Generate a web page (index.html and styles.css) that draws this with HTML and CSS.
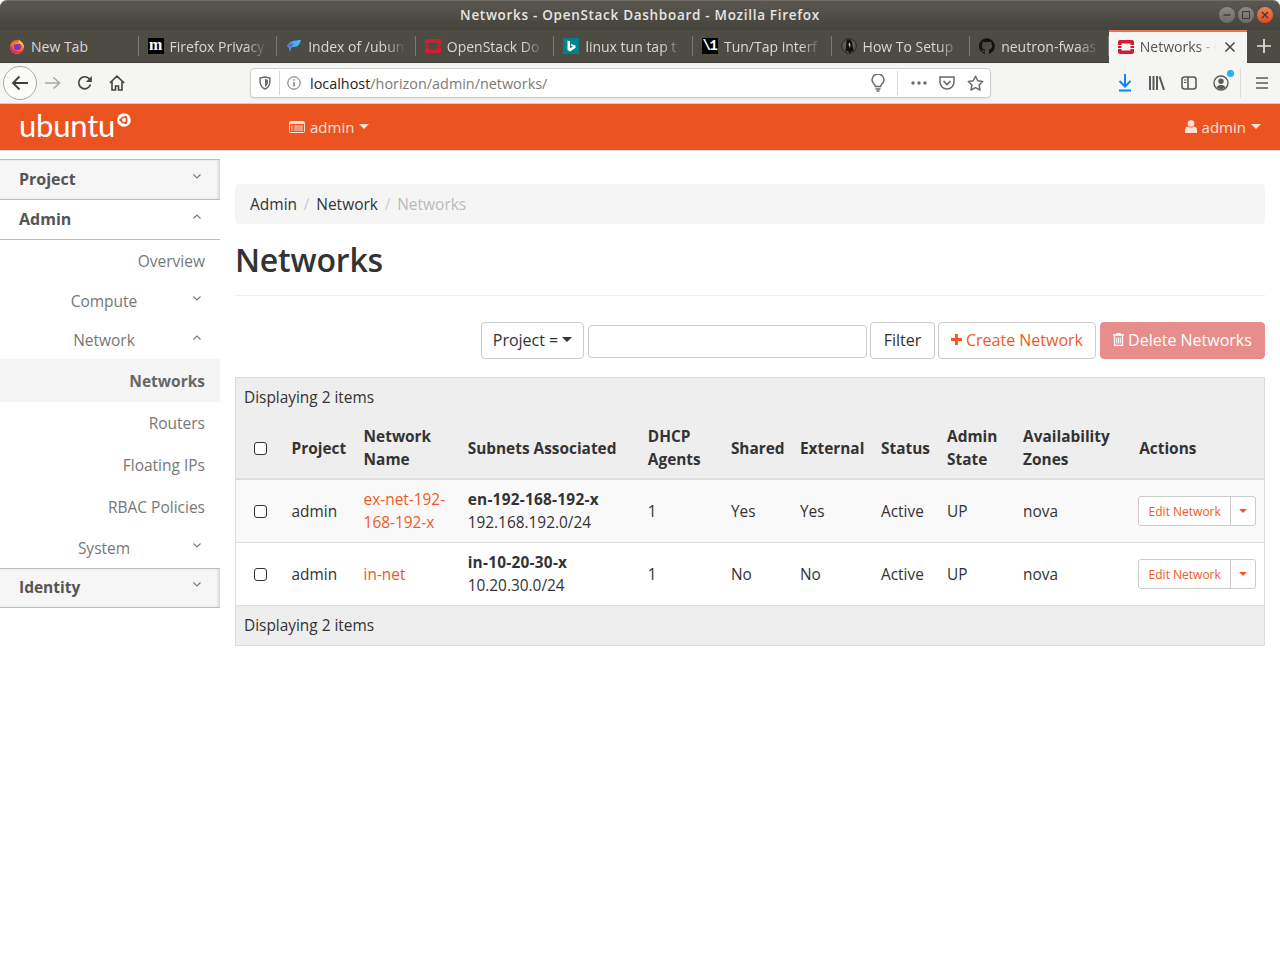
FILE: index.html
```html
<!DOCTYPE html>
<html lang="en">
<head>
  <meta charset="UTF-8">
  <title>Networks - OpenStack Dashboard - Mozilla Firefox</title>
  <link rel="stylesheet" href="styles.css">
</head>
<body>
  <!-- browser window chrome -->
  <div class="titlebar">
    <span class="title-text">Networks - OpenStack Dashboard - Mozilla Firefox</span>
    <div class="win-btns">
      <span class="win-btn"><svg width="16" height="16" viewBox="0 0 16 16"><path d="M4.500 8h7" stroke="#3c3b37" stroke-width="1.500"/></svg></span>
      <span class="win-btn"><svg width="16" height="16" viewBox="0 0 16 16"><rect x="4.500" y="4.500" width="7" height="7" fill="none" stroke="#3c3b37"/></svg></span>
      <span class="win-btn win-close"><svg width="16" height="16" viewBox="0 0 16 16"><path d="M5 5l6 6M11 5l-6 6" stroke="#3c3b37" stroke-width="1.400"/></svg></span>
    </div>
  </div>

  <div class="tabstrip">
    <div class="tab">
      <svg class="favicon" viewBox="0 0 16 16"><circle cx="8" cy="9" r="7" fill="#f5702b"/><path d="M9.500 .5c.5 2 2 2.500 3.500 4 1.500 1.500 2.300 3.500 2 6-1-3-3-5-6-5.500 1-1.500 1-3 .5-4.500z" fill="#fdc52e"/><path d="M1 9c.2 3.500 3 6.500 7 6.500 3 0 5.500-1.500 6.500-4-2 2-5 2.500-7.500 1.500C4.500 12 3 10.500 3 8z" fill="#e8285a"/><circle cx="8.300" cy="8.800" r="3.500" fill="#7b36c8"/><path d="M5 6.500c1-1.500 4-2 6-.5-2 0-4 0-6 .5z" fill="#f9a03a"/></svg>
      <span class="tab-label tab-label-full">New Tab</span>
    </div>
    <div class="tab">
      <span class="favicon fav-text fav-m">m</span>
      <span class="tab-label">Firefox Privacy</span>
    </div>
    <div class="tab">
      <svg class="favicon" viewBox="0 0 16 16"><path d="M1 8c2-4 7-6 14-6-1 4-3 7-7 7-1 0-2 0-3 1l-1 4-1-4c-1-1-1-2-2-2z" fill="#3fb6ec"/><path d="M1 8c2-2 4-3 7-3l-3 5c-1-1-3-1-4-2z" fill="#7a5fd0"/></svg>
      <span class="tab-label">Index of /ubun</span>
    </div>
    <div class="tab">
      <svg class="favicon" viewBox="0 0 16 16"><use href="#os-logo"/></svg>
      <span class="tab-label">OpenStack Do</span>
    </div>
    <div class="tab">
      <svg class="favicon" viewBox="0 0 16 16"><rect width="16" height="16" fill="#00808a"/><path d="M4.500 2.500l2.500.8v7l3-1.700-1.500-.7-.9-2.200 4.900 1.700v2.600L7 13.500l-2.500-1.400z" fill="#fff"/></svg>
      <span class="tab-label">linux tun tap t</span>
    </div>
    <div class="tab">
      <span class="favicon fav-text fav-v">\1</span>
      <span class="tab-label">Tun/Tap interf</span>
    </div>
    <div class="tab">
      <svg class="favicon" viewBox="0 0 16 16"><circle cx="8" cy="8" r="7.300" fill="#5d5a52" stroke="#26251f"/><path d="M7.500 1.500c2.500 0 3.500 2 3.500 4 0 3 2 5 1.500 8.500l-2-1L9 15.500 7 13l-2.500.5c0-3 1-5 .8-7.500C5 3.500 5.500 1.500 7.500 1.500z" fill="#0f0e0b"/><path d="M8.500 4.500c1 .5 1 3 .5 5.500l-1.500-3.500z" fill="#c9c8c2"/></svg>
      <span class="tab-label">How To Setup</span>
    </div>
    <div class="tab">
      <svg class="favicon" viewBox="0 0 16 16"><path fill="#111" d="M8 .2a8 8 0 0 0-2.500 15.600c.4.100.5-.2.500-.4v-1.400c-2.200.5-2.700-1-2.700-1-.4-.9-.9-1.200-.9-1.200-.7-.5.100-.5.100-.5.800.100 1.200.8 1.200.8.700 1.200 1.900.9 2.300.7.100-.5.300-.9.500-1.100-1.800-.2-3.600-.9-3.600-4 0-.9.300-1.600.8-2.100-.1-.2-.4-1 .1-2.100 0 0 .7-.2 2.200.8a7.500 7.500 0 0 1 4 0c1.500-1 2.200-.8 2.200-.8.400 1.100.2 1.900.1 2.100.5.600.8 1.300.8 2.100 0 3.100-1.900 3.700-3.700 3.900.3.300.6.800.6 1.500v2.200c0 .2.100.5.600.4A8 8 0 0 0 8 .2z"/></svg>
      <span class="tab-label">neutron-fwaas</span>
    </div>
    <div class="tab tab-active">
      <svg class="favicon" viewBox="0 0 16 16"><use href="#os-logo"/></svg>
      <span class="tab-label">Networks - O</span>
      <svg class="tab-close" width="12" height="12" viewBox="0 0 12 12"><path d="M1.500 1.500l9 9M10.500 1.500l-9 9" stroke="#45443f" stroke-width="1.500"/></svg>
    </div>
    <svg class="tab-new" width="14" height="14" viewBox="0 0 14 14"><path d="M7 0v14M0 7h14" stroke="#e4e3df" stroke-width="1.700"/></svg>
  </div>

  <svg class="defs-only" width="0" height="0">
    <defs>
      <g id="os-logo"><path fill="#da1a32" d="M2 1h12a2 2 0 0 1 2 2v3h-3.500V4.500h-9V6H0V3a2 2 0 0 1 2-2zM0 10h3.500v1.500h9V10H16v3a2 2 0 0 1-2 2H2a2 2 0 0 1-2-2z"/><rect y="7" width="3.500" height="2" fill="#da1a32"/><rect x="12.500" y="7" width="3.500" height="2" fill="#da1a32"/></g>
    </defs>
  </svg>

  <div class="toolbar">
    <span class="back-btn"><svg width="18" height="16" viewBox="0 0 18 16"><path d="M17 8H2M8.500 1.500L2 8l6.500 6.500" fill="none" stroke="#3f3e3a" stroke-width="1.800"/></svg></span>
    <svg class="tool-fwd" width="16" height="14" viewBox="0 0 16 14"><path d="M0 7h14M8.500 1.500L14.500 7l-6 5.500" fill="none" stroke="#a8a8a6" stroke-width="1.600"/></svg>
    <svg class="tool-reload" width="16" height="16" viewBox="0 0 16 16"><path d="M13.500 9.500A6 6 0 1 1 12 3.500L14 5.500" fill="none" stroke="#45443f" stroke-width="1.700"/><path d="M14.800 1v6h-6z" fill="#45443f"/></svg>
    <svg class="tool-home" width="16" height="16" viewBox="0 0 16 16"><path d="M.8 8L8 1.200 15.200 8M3 6.500V15h3.500v-4h3v4H13V6.500" fill="none" stroke="#45443f" stroke-width="1.600"/></svg>

    <div class="urlbar">
      <svg class="url-shield" width="12" height="14" viewBox="0 0 12 14"><path d="M1 2l5-1 5 1c0 5 0 9-5 11C1 11 1 7 1 2z" fill="none" stroke="#6b6a66" stroke-width="1.500"/><path d="M6 3l3 .7C9 7 9 9 6 10.800z" fill="#6b6a66"/></svg>
      <span class="url-sep"></span>
      <svg class="url-info" width="14" height="14" viewBox="0 0 14 14"><circle cx="7" cy="7" r="6.200" fill="none" stroke="#6b6a66"/><path d="M7 6v4.500M7 3.200v1.500" stroke="#6b6a66" stroke-width="1.300"/></svg>
      <span class="url-text"><span class="url-host">localhost</span>/horizon/admin/networks/</span>
      <svg class="url-bulb" width="14" height="18" viewBox="0 0 14 18"><path d="M4.500 12.500C4 10 1 9 1 6a6 6 0 0 1 12 0c0 3-3 4-3.500 6.500z" fill="none" stroke="#6b6a66" stroke-width="1.500"/><path d="M4.500 15h5M5.500 17h3" stroke="#6b6a66" stroke-width="1.300"/></svg>
      <span class="url-sep url-sep-right"></span>
      <svg class="url-dots" width="16" height="4" viewBox="0 0 16 4"><circle cx="2" cy="2" r="1.700" fill="#6b6a66"/><circle cx="8" cy="2" r="1.700" fill="#6b6a66"/><circle cx="14" cy="2" r="1.700" fill="#6b6a66"/></svg>
      <svg class="url-pocket" width="16" height="14" viewBox="0 0 16 14"><path d="M1 1h14v5a7 7 0 0 1-14 0z" fill="none" stroke="#6b6a66" stroke-width="1.500"/><path d="M4.500 5L8 8.500 11.500 5" fill="none" stroke="#6b6a66" stroke-width="1.700"/></svg>
      <svg class="url-star" width="17" height="16" viewBox="0 0 17 16"><path d="M8.500 1.200l2.200 4.600 5 .7-3.600 3.500.9 5-4.500-2.400L4 15l.9-5L1.300 6.500l5-.7z" fill="none" stroke="#6b6a66" stroke-width="1.500" stroke-linejoin="round"/></svg>
    </div>

    <div class="tool-right">
      <svg class="tool-download" width="14" height="18" viewBox="0 0 14 18"><path d="M7 0v12.500M1.500 7L7 12.500 12.500 7M1 16.500h12" fill="none" stroke="#0a84ff" stroke-width="2"/></svg>
      <svg width="16" height="14" viewBox="0 0 16 14"><path d="M1 0v14M4.500 0v14M8 0v14M10.500 .5l4.500 13.500" fill="none" stroke="#5b5a55" stroke-width="2"/></svg>
      <svg width="16" height="14" viewBox="0 0 16 14"><rect x="1" y="1" width="14" height="12" rx="2.500" fill="none" stroke="#5b5a55" stroke-width="1.600"/><path d="M7 1v12" stroke="#5b5a55" stroke-width="1.600"/><path d="M3 4h2.500M3 6.500h2.500" stroke="#5b5a55"/></svg>
      <span class="tool-account"><svg width="16" height="16" viewBox="0 0 16 16"><circle cx="8" cy="8" r="7" fill="none" stroke="#5b5a55" stroke-width="1.400"/><circle cx="8" cy="6.300" r="2.700" fill="#5b5a55"/><path d="M3.500 12.500c1-2 2.500-2.500 4.500-2.500s3.500.5 4.500 2.500a7 7 0 0 1-9 0z" fill="#5b5a55"/></svg><span class="tool-dot"></span></span>
      <span class="tool-sep"></span>
      <svg width="12" height="12" viewBox="0 0 12 12"><path d="M0 1h12M0 6h12M0 11h12" stroke="#5b5a55" stroke-width="1.700"/></svg>
    </div>
  </div>

  <!-- horizon page -->
  <nav class="topnav">
    <span class="brand">ubuntu<svg class="brand-mark" width="14" height="14" viewBox="0 0 14 14"><circle cx="7" cy="7" r="6.800" fill="#fff"/><circle cx="7" cy="7" r="2.800" fill="none" stroke="#eb5421" stroke-width="1.600"/><circle cx="3.400" cy="7" r="1.200" fill="#eb5421"/><circle cx="8.800" cy="3.900" r="1.200" fill="#eb5421"/><circle cx="8.800" cy="10.100" r="1.200" fill="#eb5421"/></svg></span>
    <span class="nav-project">
      <svg width="16" height="12" viewBox="0 0 16 12"><rect x=".5" y=".5" width="15" height="11" rx="1" fill="none" stroke="#fbe0d5"/><path d="M1 1h14v2H1z" fill="#fbe0d5"/><path d="M2 5h2M5 5h9M2 7h2M5 7h9M2 9h2M5 9h9" stroke="#fbe0d5"/></svg>
      admin <i class="caret"></i>
    </span>
    <span class="nav-user">
      <svg width="12" height="13" viewBox="0 0 12 13"><circle cx="6" cy="3.500" r="3.300" fill="#fbe0d5"/><path d="M0 13V10c0-2.500 1.500-3.500 3-3.500 1 .8 2 1 3 1s2-.2 3-1c1.500 0 3 1 3 3.500v3z" fill="#fbe0d5"/></svg>
      admin <i class="caret"></i>
    </span>
  </nav>

  <div class="page">
    <aside class="sidebar">
      <div class="side-head side-closed"><span>Project</span><svg class="chev" width="8" height="5" viewBox="0 0 8 5"><path d="M.5.500L4 4 7.500.500" fill="none" stroke="#777" stroke-width="1.100"/></svg></div>
      <div class="side-head side-open"><span>Admin</span><svg class="chev" width="8" height="5" viewBox="0 0 8 5"><path d="M.5 4.500L4 1l3.500 3.500" fill="none" stroke="#777" stroke-width="1.100"/></svg></div>
      <div class="side-item side-overview">Overview</div>
      <div class="side-group"><span>Compute</span><svg class="chev" width="8" height="5" viewBox="0 0 8 5"><path d="M.5.500L4 4 7.500.500" fill="none" stroke="#777" stroke-width="1.100"/></svg></div>
      <div class="side-group"><span>Network</span><svg class="chev" width="8" height="5" viewBox="0 0 8 5"><path d="M.5 4.500L4 1l3.500 3.500" fill="none" stroke="#777" stroke-width="1.100"/></svg></div>
      <div class="side-item side-current">Networks</div>
      <div class="side-item">Routers</div>
      <div class="side-item">Floating IPs</div>
      <div class="side-item">RBAC Policies</div>
      <div class="side-group side-system"><span>System</span><svg class="chev" width="8" height="5" viewBox="0 0 8 5"><path d="M.5.500L4 4 7.500.500" fill="none" stroke="#777" stroke-width="1.100"/></svg></div>
      <div class="side-head side-closed side-identity"><span>Identity</span><svg class="chev" width="8" height="5" viewBox="0 0 8 5"><path d="M.5.500L4 4 7.500.500" fill="none" stroke="#777" stroke-width="1.100"/></svg></div>
    </aside>

    <main class="content">
      <ol class="breadcrumb">
        <li>Admin</li>
        <li class="crumb-sep">/</li>
        <li>Network</li>
        <li class="crumb-sep">/</li>
        <li class="crumb-active">Networks</li>
      </ol>
      <h1 class="page-title">Networks</h1>

      <div class="actions">
        <button class="btn btn-select">Project = <i class="caret caret-dark"></i></button>
        <input class="filter-input" type="text">
        <button class="btn btn-filter">Filter</button>
        <button class="btn btn-create"><svg width="13" height="13" viewBox="0 0 13 13"><path d="M6.500 0v13M0 6.500h13" stroke="#f05a22" stroke-width="3.400"/></svg>Create Network</button>
        <button class="btn btn-delete"><svg width="11" height="13" viewBox="0 0 11 13"><path d="M0 2h11M4 2V.700h3V2M1.500 3v9.300h8V3" fill="none" stroke="#fff" stroke-width="1.300"/><path d="M3.700 4.500v6M5.500 4.500v6M7.300 4.500v6" stroke="#fff"/></svg>Delete Networks</button>
      </div>

      <table class="net-table">
        <colgroup>
          <col class="col-check">
          <col class="col-project">
          <col class="col-name">
          <col class="col-subnets">
          <col class="col-dhcp">
          <col class="col-shared">
          <col class="col-external">
          <col class="col-status">
          <col class="col-admin">
          <col class="col-zones">
          <col class="col-actions">
        </colgroup>
        <thead>
          <tr class="row-caption"><td colspan="11">Displaying 2 items</td></tr>
          <tr class="row-head">
            <th><input class="check" type="checkbox"></th>
            <th>Project</th>
            <th>Network Name</th>
            <th>Subnets Associated</th>
            <th>DHCP Agents</th>
            <th>Shared</th>
            <th>External</th>
            <th>Status</th>
            <th>Admin State</th>
            <th>Availability Zones</th>
            <th>Actions</th>
          </tr>
        </thead>
        <tbody>
          <tr class="row-odd">
            <td><input class="check" type="checkbox"></td>
            <td>admin</td>
            <td><a class="net-link">ex-net-192-168-192-x</a></td>
            <td><b>en-192-168-192-x</b><br>192.168.192.0/24</td>
            <td>1</td>
            <td>Yes</td>
            <td>Yes</td>
            <td>Active</td>
            <td>UP</td>
            <td>nova</td>
            <td><span class="btn-split"><span class="split-main">Edit Network</span><span class="split-caret"><i class="caret caret-orange"></i></span></span></td>
          </tr>
          <tr>
            <td><input class="check" type="checkbox"></td>
            <td>admin</td>
            <td><a class="net-link">in-net</a></td>
            <td><b>in-10-20-30-x</b><br>10.20.30.0/24</td>
            <td>1</td>
            <td>No</td>
            <td>No</td>
            <td>Active</td>
            <td>UP</td>
            <td>nova</td>
            <td><span class="btn-split"><span class="split-main">Edit Network</span><span class="split-caret"><i class="caret caret-orange"></i></span></span></td>
          </tr>
        </tbody>
        <tfoot>
          <tr class="row-caption row-foot"><td colspan="11">Displaying 2 items</td></tr>
        </tfoot>
      </table>
    </main>
  </div>
</body>
</html>
```

FILE: styles.css
```css
html, body {
  height: 100%;
  margin: 0;
  padding: 0;
  background-color: #fff;
  font-family: "Open Sans", "Noto Sans", sans-serif;
  font-size: 15px;
  color: #333;
  overflow: hidden;
}

/* window title bar */
.titlebar {
  height: 30px;
  display: flex;
  align-items: center;
  justify-content: center;
  position: relative;
  box-sizing: border-box;
  padding-bottom: 2px;
  background: linear-gradient(#5a5850, #44423c);
  border-radius: 7px 7px 0 0;
  border-top: 1px solid #6e6c64;
}
.title-text {
  color: #e6e5e1;
  font-weight: 600;
  font-size: 13.5px;
  letter-spacing: 0.7px;
}
.win-btns {
  position: absolute;
  right: 7px;
  top: 6px;
  display: flex;
  gap: 3px;
}
.win-btn {
  width: 16px;
  height: 16px;
  border-radius: 50%;
  background: linear-gradient(#8b8981, #6d6b64);
}
.win-close {
  background: linear-gradient(#f0815a, #dc4d20);
}
.win-btn svg {
  display: block;
}

/* tabs */
.tabstrip {
  height: 33px;
  display: flex;
  background-color: #4e4b43;
  position: relative;
  box-sizing: border-box;
  border-bottom: 1px solid #3c3a34;
}
.tab {
  width: 138.6px;
  flex: none;
  box-sizing: border-box;
  display: flex;
  align-items: center;
  padding-left: 9px;
  padding-right: 10px;
  gap: 6px;
  color: #d9d8d3;
  font-size: 14px;
  position: relative;
  white-space: nowrap;
}
.tab::after {
  content: "";
  position: absolute;
  right: 0;
  top: 6px;
  bottom: 6px;
  width: 1px;
  background-color: #7a7870;
}
.tab-label {
  flex: 1;
  min-width: 0;
  -webkit-mask-image: linear-gradient(to right, #000 78%, transparent);
  mask-image: linear-gradient(to right, #000 78%, transparent);
}
.tab-label-full {
  -webkit-mask-image: none;
  mask-image: none;
}
.tab-active {
  background-color: #f5f5f3;
  color: #55544f;
  border-top: 2px solid #e9754a;
  height: 33px;
  padding-right: 11px;
  padding-bottom: 2px;
}
.tab-active::after {
  display: none;
}
.tab-active .tab-label {
  -webkit-mask-image: linear-gradient(to right, #000 74%, transparent 98%);
  mask-image: linear-gradient(to right, #000 74%, transparent 98%);
}
.tab-close {
  flex: none;
  margin-top: 1px;
}
.tab-new {
  margin-left: 10px;
  align-self: center;
}
.favicon {
  width: 16px;
  height: 16px;
  flex: none;
}
.fav-text {
  display: block;
  font-weight: 700;
  text-align: center;
  line-height: 16px;
  color: #fff;
  background-color: #000;
  font-size: 13px;
}
.fav-m {
  font-family: "Liberation Serif", serif;
  font-size: 16px;
  line-height: 13px;
}
.fav-v {
  font-family: "Liberation Mono", monospace;
  font-size: 14px;
  letter-spacing: -1.5px;
  text-indent: -1px;
}
.defs-only {
  position: absolute;
}

/* url toolbar */
.toolbar {
  height: 41px;
  display: flex;
  align-items: center;
  box-sizing: border-box;
  background-color: #f5f5f3;
  border-bottom: 1px solid #cfcfcc;
  padding-left: 3px;
}
.back-btn {
  width: 34px;
  height: 34px;
  flex: none;
  box-sizing: border-box;
  border: 1px solid #a9a9a6;
  border-radius: 50%;
  background-color: #fbfbfa;
  display: flex;
  align-items: center;
  justify-content: center;
}
.tool-fwd {
  margin-left: 8px;
}
.tool-reload {
  margin-left: 16px;
}
.tool-home {
  margin-left: 16px;
}
.urlbar {
  margin-left: 125px;
  width: 741px;
  height: 30px;
  box-sizing: border-box;
  border: 1px solid #cfcfcc;
  border-radius: 4px;
  background-color: #fff;
  display: flex;
  align-items: center;
  padding-left: 8px;
  box-shadow: 0 1px 2px rgba(0,0,0,0.08);
}
.url-sep {
  width: 1px;
  height: 24px;
  background-color: #d7d7d4;
  margin-left: 8px;
}
.url-info {
  margin-left: 7px;
}
.url-text {
  margin-left: 9px;
  width: 561px;
  flex: none;
  font-size: 14.4px;
  color: #7a7a78;
}
.url-host {
  color: #222;
}
.url-sep-right {
  margin-left: 12px;
}
.url-dots {
  margin-left: 13px;
}
.url-pocket {
  margin-left: 12px;
}
.url-star {
  margin-left: 12px;
}
.tool-right {
  display: flex;
  align-items: center;
  margin-left: 127px;
  gap: 16px;
}
.tool-download {
  margin-right: 1px;
}
.tool-account {
  display: block;
  position: relative;
  height: 16px;
}
.tool-dot {
  position: absolute;
  right: -5px;
  top: -5px;
  width: 7px;
  height: 7px;
  border-radius: 50%;
  background-color: #1fb2f5;
}
.tool-sep {
  width: 1px;
  height: 30px;
  background-color: #dcdcd9;
  margin-left: -5px;
  margin-right: -1px;
}

/* orange top nav */
.topnav {
  height: 47px;
  box-sizing: border-box;
  background-color: #eb5421;
  border-bottom: 1px solid #d9d9d9;
  display: flex;
  align-items: center;
  color: #fbe0d5;
  font-size: 15px;
  padding-left: 19px;
  padding-right: 19px;
}
.brand {
  color: #fff;
  font-family: "Lato", sans-serif;
  font-size: 31px;
  font-weight: 400;
  line-height: 42px;
  width: 270px;
  flex: none;
  display: flex;
  align-self: flex-start;
  letter-spacing: -0.2px;
}
.brand-mark {
  margin-top: 9px;
  margin-left: 2px;
}
.nav-project, .nav-user {
  display: flex;
  align-items: center;
  gap: 5px;
  padding-bottom: 1px;
}
.nav-user {
  margin-left: auto;
}
.caret {
  display: inline-block;
  width: 0;
  height: 0;
  border-left: 5px solid transparent;
  border-right: 5px solid transparent;
  border-top: 5px solid #fbe0d5;
}
.caret-dark {
  border-top-color: #333;
}
.caret-orange {
  border-left-width: 4px;
  border-right-width: 4px;
  border-top: 4px solid #f05a22;
}

/* page layout */
.page {
  display: flex;
}
.sidebar {
  width: 220px;
  flex: none;
  padding-top: 8px;
  color: #777;
  font-size: 15.5px;
}
.side-head {
  height: 40px;
  box-sizing: border-box;
  display: flex;
  align-items: center;
  justify-content: space-between;
  padding-left: 19px;
  padding-right: 19px;
  padding-bottom: 2px;
  font-size: 16px;
  font-weight: 700;
  color: #555;
  border-bottom: 1px solid #bdbdbd;
}
.side-closed {
  background-color: #f6f6f6;
  border-top: 1px solid #bdbdbd;
  box-shadow: inset -2px 0 2px rgba(0,0,0,0.12);
  height: 41px;
}
.side-open {
  background-color: #fff;
}
.side-identity {
  height: 40px;
  font-size: 15.5px;
}
.side-head .chev {
  margin-top: -5px;
}
.side-item {
  height: 42px;
  display: flex;
  align-items: center;
  justify-content: flex-end;
  padding-right: 15px;
}
.side-overview {
  height: 41px;
}
.side-current {
  height: 43px;
  background-color: #f5f5f5;
  color: #666;
  font-weight: 700;
}
.side-group {
  height: 39px;
  display: flex;
  align-items: center;
  padding-right: 19px;
}
.side-group span {
  flex: 1;
  text-align: center;
  padding-left: 15px;
}
.side-group .chev {
  margin-top: -5px;
}
.side-system {
  height: 40px;
  padding-bottom: 1px;
  box-sizing: border-box;
}

/* main content */
.content {
  flex: 1;
  padding: 33px 15px 0 15px;
  min-width: 0;
}
.breadcrumb {
  list-style: none;
  margin: 0;
  padding: 0 15px;
  height: 40px;
  display: flex;
  align-items: center;
  gap: 6.75px;
  background-color: #f5f5f5;
  border-radius: 4px;
  font-size: 15.5px;
}
.crumb-sep {
  color: #ccc;
}
.crumb-active {
  color: #bbb;
}
.page-title {
  font-size: 32px;
  font-weight: 600;
  margin: 13px 0 0 0;
  padding-bottom: 13px;
  line-height: 45px;
  border-bottom: 1px solid #eee;
  letter-spacing: -0.2px;
}

/* action row */
.actions {
  display: flex;
  justify-content: flex-end;
  align-items: center;
  margin-top: 26px;
  margin-bottom: 18px;
}
.btn {
  height: 37px;
  box-sizing: border-box;
  border: 1px solid #ccc;
  border-radius: 4px;
  background-color: #fff;
  font-family: inherit;
  font-size: 16px;
  padding: 0 12px 2px;
  display: flex;
  align-items: center;
  color: #333;
  white-space: nowrap;
  justify-content: center;
}
.btn-select {
  width: 103px;
  gap: 4px;
}
.filter-input {
  width: 279px;
  height: 33px;
  box-sizing: border-box;
  border: 1px solid #ccc;
  border-radius: 4px;
  margin-left: 4px;
  margin-right: 3px;
  margin-top: 2px;
}
.btn-filter {
  width: 65px;
}
.btn-create {
  width: 158px;
  margin-left: 3px;
  color: #f05a22;
  gap: 4px;
}
.btn-delete {
  width: 165px;
  margin-left: 4px;
  color: #fff;
  background-color: #e78d8b;
  border-color: #e78d8b;
  gap: 4px;
}

/* table */
.net-table {
  width: 1030px;
  border-collapse: collapse;
  table-layout: fixed;
  border: 1px solid #ddd;
  font-size: 15.4px;
  line-height: 23px;
}
.net-table td, .net-table th {
  padding: 8px;
  text-align: left;
  vertical-align: middle;
}
.net-table tbody td {
  border-top: 1px solid #ddd;
  height: 46px;
}
.net-table b {
  letter-spacing: 0.25px;
}
.row-caption {
  background-color: #eee;
}
.row-caption td {
  height: 23px;
}
.row-head {
  background-color: #eee;
  border-bottom: 2px solid #ddd;
}
.row-head th {
  font-weight: 700;
  height: 46px;
  padding-bottom: 7px;
}
.row-odd {
  background-color: #f9f9f9;
}
.row-foot td {
  border-top: 1px solid #ddd;
}
.col-check { width: 48px; }
.col-project { width: 72px; }
.col-name { width: 104px; }
.col-subnets { width: 180px; }
.col-dhcp { width: 83px; }
.col-shared { width: 69px; }
.col-external { width: 81px; }
.col-status { width: 66px; }
.col-admin { width: 76px; }
.col-zones { width: 116px; }
.col-actions { width: 133px; }
.check {
  appearance: none;
  -webkit-appearance: none;
  display: block;
  width: 13px;
  height: 13px;
  margin: 0 0 0 10px;
  border: 1.5px solid #333;
  border-radius: 3px;
  background-color: #fff;
  box-sizing: border-box;
}
.net-link {
  color: #f05a22;
}
.btn-split {
  display: flex;
  width: 118px;
  height: 30px;
  margin-left: -1px;
  box-sizing: border-box;
  border: 1px solid #ccc;
  border-radius: 3px;
  background-color: #fff;
  font-size: 12px;
  color: #f05a22;
  align-items: center;
}
.split-main {
  flex: 1;
  text-align: center;
}
.split-caret {
  width: 24px;
  height: 100%;
  display: flex;
  align-items: center;
  justify-content: center;
  border-left: 1px solid #ccc;
}
```
